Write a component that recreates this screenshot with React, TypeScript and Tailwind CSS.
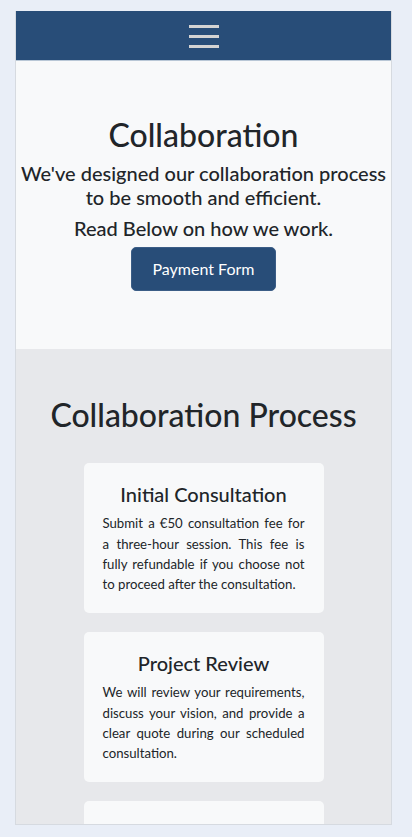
import { useState } from "react";

const steps = [
    {
        title: "Initial Consultation",
        body: "Submit a €50 consultation fee for a three-hour session. This fee is fully refundable if you choose not to proceed after the consultation.",
    },
    {
        title: "Project Review",
        body: "We will review your requirements, discuss your vision, and provide a clear quote during our scheduled consultation.",
    },
    {
        title: "Design & Development",
        body: "Once the quote is approved, we begin work on your project and keep you updated at every stage.",
    },
];

export default function App() {
    const [menuOpen, setMenuOpen] = useState(false);

    return (
        <div className="min-h-screen bg-[#e9eef7] pt-[11px] pl-[15px] font-['Lato',sans-serif] text-[#212529]">
            <div className="w-[377px] h-[814px] overflow-hidden border-x border-b border-[#d6dae0] bg-[#e7e8eb]">
                {/* Navbar */}
                <header className="h-[50px] bg-[#284d78] border-b border-[#b9c7d6] flex items-center justify-center">
                    <button
                        onClick={() => setMenuOpen(!menuOpen)}
                        className="flex flex-col gap-[7px] pt-[2px]"
                        aria-label="Menu"
                    >
                        <span className="block w-[30px] h-[3px] bg-[#d4d4d4]" />
                        <span className="block w-[30px] h-[3px] bg-[#d4d4d4]" />
                        <span className="block w-[30px] h-[3px] bg-[#d4d4d4]" />
                    </button>
                </header>

                {/* Hero */}
                <section className="bg-[#f8f9fa] h-[288px] pt-[55px] flex flex-col items-center text-center">
                    <h1 className="text-[32px] leading-[1.2] font-medium">Collaboration</h1>
                    <p className="text-[20px] leading-[1.2] font-medium mt-[7px]">
                        We've designed our collaboration process
                        <br />
                        to be smooth and efficient.
                    </p>
                    <p className="text-[20px] leading-[1.2] font-medium mt-[7px]">Read Below on how we work.</p>
                    <button className="mt-[7px] h-[44px] px-5 bg-[#284d78] border border-[#3b5d86] rounded-[5px] text-white text-base">
                        Payment Form
                    </button>
                </section>

                {/* Process */}
                <section className="pt-[47px] flex flex-col items-center">
                    <h2 className="text-[32px] leading-[1.2] font-medium">Collaboration Process</h2>
                    <div className="mt-[29px] flex flex-col gap-[19px]">
                        {steps.map((s) => (
                            <div key={s.title} className="w-[240px] h-[150px] bg-[#f8f9fa] rounded-[5px] px-[19px] pt-[19px]">
                                <h3 className="text-center text-[20px] leading-[1.2] font-medium">{s.title}</h3>
                                <p className="mt-[7px] text-[13.2px] leading-[20.3px] text-justify">{s.body}</p>
                            </div>
                        ))}
                    </div>
                </section>
            </div>
        </div>
    );
}
